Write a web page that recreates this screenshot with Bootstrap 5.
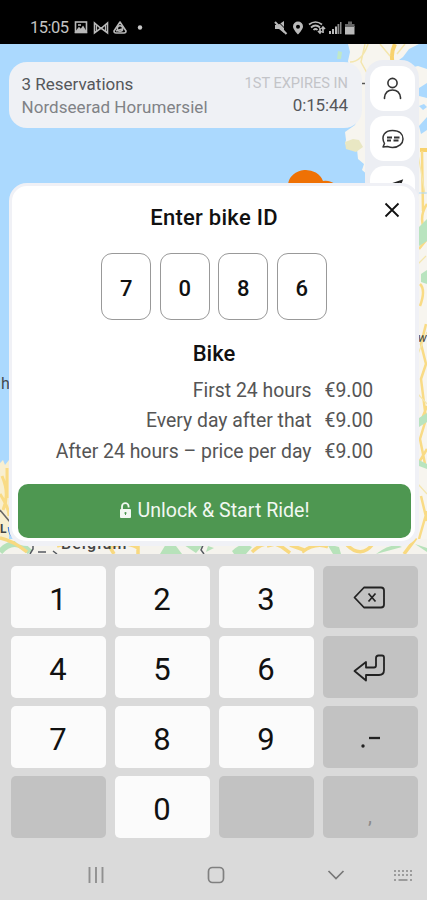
<!DOCTYPE html>
<html lang="en">
<head>
<meta charset="utf-8">
<meta name="viewport" content="width=device-width, initial-scale=1">
<title>Enter bike ID</title>
<link href="https://cdn.jsdelivr.net/npm/bootstrap@5.3.0/dist/css/bootstrap.min.css" rel="stylesheet">
<style>
body{font-family:Roboto,sans-serif;width:427px;height:900px;overflow:hidden;background:#dadada;color:#111}
.statusbar{height:44px;background:#000;color:#c4c4c4;padding:12px 71px 0 30px;font-size:16.5px;line-height:32px}
.statusbar .clock{width:38px;margin-right:6px;letter-spacing:-.5px}
.mapview{height:510px;background:#abd9fe;overflow:hidden}
.mapbg{left:0;top:0;z-index:0}
.toprow{padding:16px 8px 0 9px;height:139px;z-index:1}
.rescard{width:353px;height:66px;margin-top:2px;background:#eff1f5;border-radius:18px;padding:11px 14px 0 12.5px;font-size:17px;line-height:23px;color:#55575b}
.rescard .place{color:#808286;letter-spacing:.05px}
.rescard .expires{color:#c3c4c8;font-size:14.6px;line-height:21px}
.rescard .timer{letter-spacing:-.1px}
.siderail{width:54px;height:150px;background:#eceef3;border-radius:18px;padding:6px 4px 0 5px;gap:5px}
.railbtn{width:45px;height:45px;background:#fff;border-radius:14px;flex:none}
.sheet{margin:0 8px 0 9px;height:363px;background:#fff;border:solid #f0f1f6;border-width:3px 4px 5px 3px;border-radius:18px;z-index:2;padding:16px 4.5px 0 5.5px}
.sheet h1,.sheet h2{font-size:22px;font-weight:500;line-height:32px;margin:0;color:#111}
.sheet h1{letter-spacing:.27px}
.closebtn{right:15px;top:16px}
.pins{gap:8.5px;margin-top:19px}
.pin{width:50px;height:67px;border:1px solid #999;border-radius:11px;font-size:22px;font-weight:500;padding-top:3px}
.sheet .vehicle{margin-top:18px}
.prices{font-size:19.4px;line-height:30.5px;color:#555;margin-top:5.5px;padding-right:37px}
.prices .amount{width:49px;margin-left:13px}
.unlock{height:54px;margin-top:16.5px;background:#4e9751;border-radius:10px;color:#f2f8f2;font-size:19.6px;gap:6px}
.unlock span{padding-top:1px}
.keys{display:grid;grid-template-columns:repeat(4,95px);grid-auto-rows:62px;column-gap:9px;row-gap:8px;padding:12px 0 0 10.5px}
.keycap{background:#fbfbfb;border-radius:5px;font-size:31px;line-height:62px;padding-top:2.5px}
.keycap.fn{background:#c2c2c2}
.keycap.comma{font-size:20px;color:#8b8b8b;padding-top:9px}
.navrow{height:62px;margin-top:6px;padding:0 14px 0 87px}
.navrow .home{margin-left:102px}
.navrow .hide{margin-left:102px}
</style>
<script src="https://cdn.jsdelivr.net/npm/bootstrap@5.3.0/dist/js/bootstrap.bundle.min.js"></script>
</head>
<body>
<header class="statusbar d-flex align-items-center">
  <span class="clock">15:05</span>
  <svg width="75" height="16" viewBox="0 0 75 16" fill="none" stroke="#b8b8b8" stroke-width="1.600"><rect x="1.500" y="2" width="11" height="10.500"/><path d="M2 12l3-4 2 2 2-3 3 5z" fill="#b8b8b8"/><path d="M4 5h3"/><path d="M20.500 13V3l6.500 5.500L33.500 3v10L27 8z"/><path d="M22.500 4.500v7M31.500 4.500v7" stroke-width="1.200"/><path d="M46 2L52 11q0 2-2 2h-8q-2 0-2-2z" stroke-linejoin="round"/><circle cx="46" cy="8.500" r="2.700"/><path d="M42 11l6-2" /><circle cx="66" cy="7.500" r="2.200" fill="#c8c8c8" stroke="none"/></svg>
  <svg class="ms-auto" width="82" height="16" viewBox="0 0 82 16" fill="#bababa"><path d="M1 5h3l6-4v12l-5-4H1z"/><path d="M1 2l11.500 12" stroke="#bababa" stroke-width="2"/><path d="M3.500 1l11 11" stroke="#000"/><path d="M24 1.500a5 5 0 0 0-5 5c0 3 5 8 5 8s5-5 5-8a5 5 0 0 0-5-5zm0 3.200a2 2 0 1 1 0 4 2 2 0 0 1 0-4z"/><g fill="none" stroke="#bababa" stroke-width="1.700"><path d="M35 4.500q6.500-5 13 0M37 7.500q4.500-4 9 0M39.500 10q2-2 4 0M46 8v5M49 13V7M44 11l2 2 1.500-2M47.500 9L49 7l2 2"/></g><path d="M55 11h2v3h-2zM58 9h2v5h-2zM61 6.500h2V14h-2z"/><path d="M63.500 4h1.800v10h-1.800zM66 2h1.500v12H66z" fill="#888"/><path d="M71 6h9.500v8.500H71z"/><path d="M74 1.500h4V4h2.500v3H71V4h3z" fill="#666"/></svg>
</header>
<main class="mapview position-relative">
  <svg class="mapbg position-absolute" width="427" height="510" viewBox="0 0 427 510">
    <path d="M348 0l2 8-2 9 3 15 11 30-2 11-4 5-1 3-10 7 1 8-1 4 12 5 1 10 6 5-2 6 7 6v16l2 362h57V0z" fill="#f7f5ef"/>
    <path d="M395 19l8-6 6-8 10-5h8v25l-9-3-9 2-4-4zM419 44l8-5v15l-8-2zM419 82l8-9v13l-6 4zM419 62l5-2 3 3-4 3z" fill="#abd9fe"/>
    <path d="M338 7l4 1-1 7h-4z" fill="#bfe8c8"/>
    <path d="M345 98l8-3 6 1 4 7-7 5-10-3z" fill="#e9e7c3"/>
    <path d="M395 0q-5 10-2 20" fill="none" stroke="#f8d26c" stroke-width="4"/>
    <path d="M350 18q12 0 18-18M365 0l-4 18 12 22M380 0l10 12M405 0l-8 10" fill="none" stroke="#f4e6ad" stroke-width="1.500"/>
    <path d="M420 106h7" stroke="#f8d26c" stroke-width="4"/>
    <path d="M422 107l1 60M427 160q-8 12-3 25M419 205l8-10M420 240q6 6 0 22M426 280l-5 20 5 20-5 15 5 40-6 20 5 25M420 380l7-18M418 420l9-15M421 452l6 25M419 495l8-28" fill="none" stroke="#f9db85" stroke-width="2.500"/>
    <path d="M418 110l7 40M418 220l8-8M418 310l9-22M418 350l9 10M418 440l9 10" fill="none" stroke="#f4e6ad" stroke-width="1.200"/>
    <path d="M419 183l8-8v22l-8 5zM421 230l6-4v14l-6-2zM419 374l8-5v9l-8 5zM419 416l8 4v5l-8-3z" fill="#b9e4bf"/>
    <path d="M418 149h9" stroke="#abd9fe"/>
    <path d="M361 39.500h4" stroke="#555" stroke-width="1.500"/>
    <path d="M0 419l3-3 2 5 4-5v94H0z" fill="#f8efd0"/>
    <path d="M2 432q8 18 1 34M0 450q9 14 9 22M7 424v30" fill="none" stroke="#f9db85" stroke-width="3"/>
    <path d="M0 495h427v15H0z" fill="#f5f3ed"/>
    <path d="M0 508q14-16 30 0" fill="none" stroke="#b7e2ba" stroke-width="6"/>
    <path d="M0 494q14 3 27 14M57 502l22-6M110 504q14-8 28 0M138 496v14M108 500l6 10M252 508q14-14 30-5l8 6M267 502l12-3M302 508q14-10 26-5M347 501q14 14 26-1M404 510l12-16M290 501l14 5" stroke="#f8d980" stroke-width="3.500" fill="none"/>
    <path d="M160 510l6-10 10 2 6 8zM184 501l18 1-6 7zM206 508l2-6 6 2zM232 507q10-10 20-4l-6 7-12 0zM327 500l12 3 2 7-8 0zM376 510q16-12 26-7M415 500l12 4v4z" fill="#b7e2ba"/>
    <path d="M33 496v9l-3 5M204 499l-3 7 3 4M38 508h8M53 507l4 3" stroke="#555a60" stroke-width="1.500" fill="none"/>
    <path d="M0 466l10 12" stroke="#666" stroke-width="1.500"/>
    <path d="M9 483q0 8 6 11" stroke="#4d84d8" stroke-width="2.500" fill="none"/>
    <text x="1" y="345" font-size="16" fill="#454a50">h</text><text x="0" y="489" font-size="12" font-weight="700" fill="#444">L</text><text x="418" y="298" font-size="12" font-style="italic" fill="#444">w</text><text x="61" y="505" font-size="16" letter-spacing="1.100" font-weight="500" fill="#444">Belgium</text>
    <path d="M288 140a18 16 0 0 1 35-3q7-1 13 4z" fill="#ef7104"/>
  </svg>
  <div class="toprow position-relative d-flex justify-content-between">
    <section class="rescard d-flex justify-content-between">
      <div><div>3 Reservations</div><div class="place">Nordseerad Horumersiel</div></div>
      <div class="text-end"><div class="expires">1ST EXPIRES IN</div><div class="timer">0:15:44</div></div>
    </section>
    <nav class="siderail d-flex flex-column">
      <div class="railbtn d-flex align-items-center justify-content-center"><svg width="22" height="24" viewBox="0 0 22 24" fill="none" stroke="#333" stroke-width="1.600" stroke-linecap="round"><circle cx="10.500" cy="6" r="4.600"/><path d="M2.500 21.500v-1q1-7.500 8-7.500t8 7.500v1"/></svg></div>
      <div class="railbtn d-flex align-items-center justify-content-center"><svg width="24" height="22" viewBox="0 0 24 22" fill="none" stroke="#333" stroke-width="1.500" stroke-linejoin="round"><path d="M3.500 15.500C-.5 8 4 2.500 11.500 2.500s10.500 4 10.500 8.500-4 8.500-10.500 8.500c-3 0-4-.8-5-1L2 19z"/><path d="M6 9.500h5M13 9.500h5.500M6 12.500h4M12.500 12.500h5" stroke-width="1.800"/></svg></div>
      <div class="railbtn d-flex justify-content-center pt-2"><svg class="mt-1" width="22" height="22" viewBox="0 0 22 22"><path d="M19.500 3L3 8.500l8 3 2 8z" fill="none" stroke="#222" stroke-width="2"/></svg></div>
    </nav>
  </div>
  <section class="sheet position-relative">
    <button class="closebtn btn p-0 border-0 position-absolute lh-1" aria-label="Close"><svg class="d-block" width="16" height="16" viewBox="0 0 16 16" stroke="#111" stroke-width="1.800"><path d="M1.500 1.500l13 13M14.500 1.500l-13 13"/></svg></button>
    <h1 class="text-center">Enter bike ID</h1>
    <div class="pins d-flex justify-content-center">
      <div class="pin d-flex align-items-center justify-content-center">7</div><div class="pin d-flex align-items-center justify-content-center">0</div><div class="pin d-flex align-items-center justify-content-center">8</div><div class="pin d-flex align-items-center justify-content-center">6</div>
    </div>
    <h2 class="vehicle text-center">Bike</h2>
    <div class="prices">
      <div class="d-flex justify-content-end"><span>First 24 hours</span><span class="amount">€9.00</span></div>
      <div class="d-flex justify-content-end"><span>Every day after that</span><span class="amount">€9.00</span></div>
      <div class="d-flex justify-content-end"><span>After 24 hours – price per day</span><span class="amount">€9.00</span></div>
    </div>
    <button class="unlock btn border-0 w-100 p-0 d-flex align-items-center justify-content-center"><svg width="13" height="17" viewBox="0 0 13 17"><path d="M3 8V4.500a3.300 3.300 0 0 1 6.600 0V5.500" fill="none" stroke="#f2f8f2" stroke-width="1.800"/><path d="M2 7h9a1 1 0 0 1 1 1v7a1 1 0 0 1-1 1H2a1 1 0 0 1-1-1V8a1 1 0 0 1 1-1zm4.500 3a1 1 0 0 0-.5 1.900V13h1v-1.100a1 1 0 0 0-.5-1.900z" fill="#f2f8f2" fill-rule="evenodd"/></svg><span>Unlock &amp; Start Ride!</span></button>
  </section>
</main>
<section class="keys text-center">
  <div class="keycap">1</div><div class="keycap">2</div><div class="keycap">3</div>
  <div class="keycap fn d-flex align-items-center justify-content-center"><svg width="34" height="24" viewBox="0 0 34 24" fill="none" stroke="#222" stroke-width="1.800" stroke-linejoin="round"><path d="M11 1.500h17q3 0 3 3v14q0 3-3 3H11L1.500 11.500z"/><path d="M15.500 7.500l7 8M22.500 7.500l-7 8" stroke-width="1.700"/></svg></div>
  <div class="keycap">4</div><div class="keycap">5</div><div class="keycap">6</div>
  <div class="keycap fn d-flex align-items-center justify-content-center"><svg width="34" height="28" viewBox="0 0 34 28" fill="none" stroke="#222" stroke-width="1.800" stroke-linejoin="round"><path d="M25.500 1.500H29q2 0 2 2V16q0 5-5 5H13v5.500L1.500 17 13 8v5.500h8q2 0 2-2V4q0-2.500 2.500-2.500z"/></svg></div>
  <div class="keycap">7</div><div class="keycap">8</div><div class="keycap">9</div>
  <div class="keycap fn d-flex align-items-center justify-content-center"><svg width="26" height="30" viewBox="0 0 26 30" role="img" aria-label="Period and dash"><circle cx="6" cy="23" r="1.700" fill="#222"/><path d="M12 15h11" stroke="#222" stroke-width="2.300"/></svg></div>
  <div class="keycap fn"></div><div class="keycap">0</div><div class="keycap fn"></div><div class="keycap fn comma">,</div>
</section>
<footer class="navrow d-flex align-items-center">
  <svg width="18" height="18" viewBox="0 0 18 18" stroke="#909090" stroke-width="1.900"><path d="M2.500 1v16M9 1v16M15.500 1v16"/></svg>
  <svg class="home" width="18" height="18" viewBox="0 0 18 18" fill="none" stroke="#808080" stroke-width="1.700"><rect x="1.500" y="1.500" width="15" height="15" rx="4"/></svg>
  <svg class="hide" width="18" height="18" viewBox="0 0 18 18" fill="none" stroke="#777" stroke-width="1.700"><path d="M1.500 5L9 12.500 16.500 5"/></svg>
  <svg class="ms-auto" width="20" height="14" viewBox="0 0 20 14" fill="none" stroke="#888" stroke-width="1.600"><path d="M1 3h18M1 7h18" stroke-dasharray="2 2"/><path d="M1 12h2M5.500 12h9M17 12h2"/></svg>
</footer>
</body>
</html>
